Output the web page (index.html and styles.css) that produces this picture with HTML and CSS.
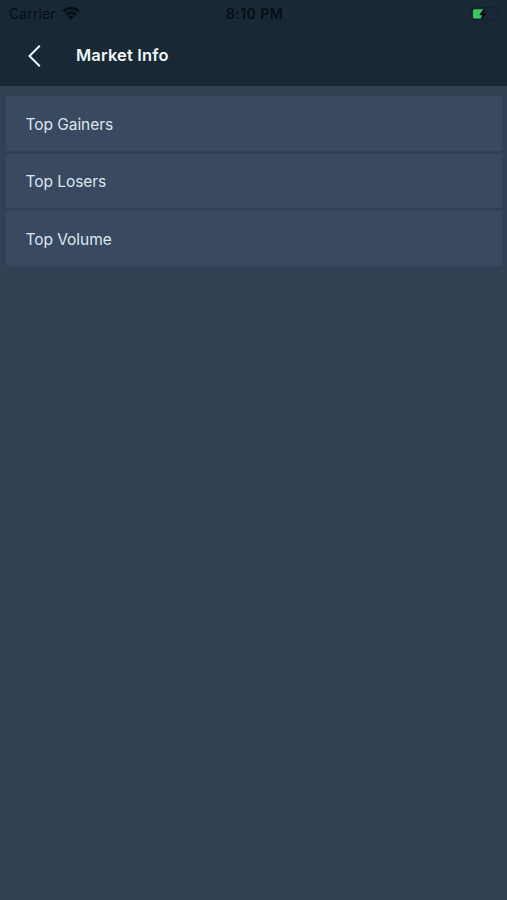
FILE: index.html
```html
<!DOCTYPE html>
<html lang="en">
<head>
  <meta charset="UTF-8" />
  <meta name="viewport" content="width=device-width, initial-scale=1.0" />
  <title>Market Info</title>
  <link rel="stylesheet" href="styles.css">
</head>
<body>

  <header class="header">
    <div class="status-bar">
      <div class="carrier">
        <span>Carrier</span>
        <svg class="wifi" viewBox="0 0 18 13" width="18" height="13">
          <path d="M1.2 4.4a11.2 11.2 0 0 1 15.6 0M4.1 7.6a7 7 0 0 1 9.8 0" fill="none" stroke="currentColor" stroke-width="2.6" />
          <path d="M9 12.8 5.9 9.9a4.4 4.4 0 0 1 6.2 0z" fill="currentColor" />
        </svg>
      </div>
      <div class="time">8:10 PM</div>
      <div class="power">
        <svg viewBox="0 0 29 14" width="29" height="14">
          <rect x="0.5" y="0.7" width="25" height="12.4" rx="3.2" fill="none" stroke="#13212d" />
          <path d="M27 4.8v4.4c1.6-.8 1.6-3.6 0-4.4z" fill="#13212d" />
          <path d="M3.6 2.3h8.6L8.6 7.2v1h2.4L9.7 11.5H3.6a1.6 1.6 0 0 1-1.6-1.6v-6a1.6 1.6 0 0 1 1.6-1.6z" fill="#3ac45e" />
          <path d="M13.7 2 8.8 7.7h3.2l-1.4 4.4 5-5.9h-3.2z" fill="#050b10" />
        </svg>
      </div>
    </div>
    <div class="nav">
      <button class="back" aria-label="Back">
        <svg viewBox="0 0 14 24" width="14" height="24">
          <path d="M12.8 1.8 2.5 12l10.3 10.2" fill="none" stroke="currentColor" stroke-width="2" />
        </svg>
      </button>
      <h1 class="title">Market Info</h1>
    </div>
  </header>

  <main class="list">
    <a class="item">Top Gainers</a>
    <a class="item">Top Losers</a>
    <a class="item">Top Volume</a>
  </main>

</body>
</html>
```
FILE: styles.css
```css
* { box-sizing: border-box; }
body { margin: 0; min-height: 100vh; background: #324153; font-family: Inter, Roboto, sans-serif; }
.header { height: 86px; background: #192835; }
.status-bar { display: grid; grid-template-columns: 1fr auto 1fr; align-items: center; height: 27px; padding: 0 7px 0 9px; color: #050d15; font-size: 14px; }
.carrier { display: flex; align-items: center; gap: 6px; letter-spacing: 0.1px; }
.wifi { display: block; }
.time { font-weight: 600; letter-spacing: 0.5px; }
.power { display: flex; justify-content: flex-end; }
.power svg { display: block; }
.nav { display: flex; align-items: center; height: 57px; padding-left: 27px; }
.back { display: flex; padding: 0; border: none; background: none; color: #f0f7fa; cursor: pointer; }
.title { margin: 0 0 2px 35px; color: #f0f7fa; font-size: 16.5px; font-weight: 600; letter-spacing: 0.15px; }
.list { display: flex; flex-direction: column; gap: 3px; padding: 10px 5px 0 6px; }
.item { display: flex; align-items: center; height: 54.5px; padding: 2px 20px 0 19.5px; background: #394a60; box-shadow: 0 0 2px #34465a; color: #dce6ef; font-size: 15.5px; letter-spacing: -0.05px; cursor: pointer; }
```
